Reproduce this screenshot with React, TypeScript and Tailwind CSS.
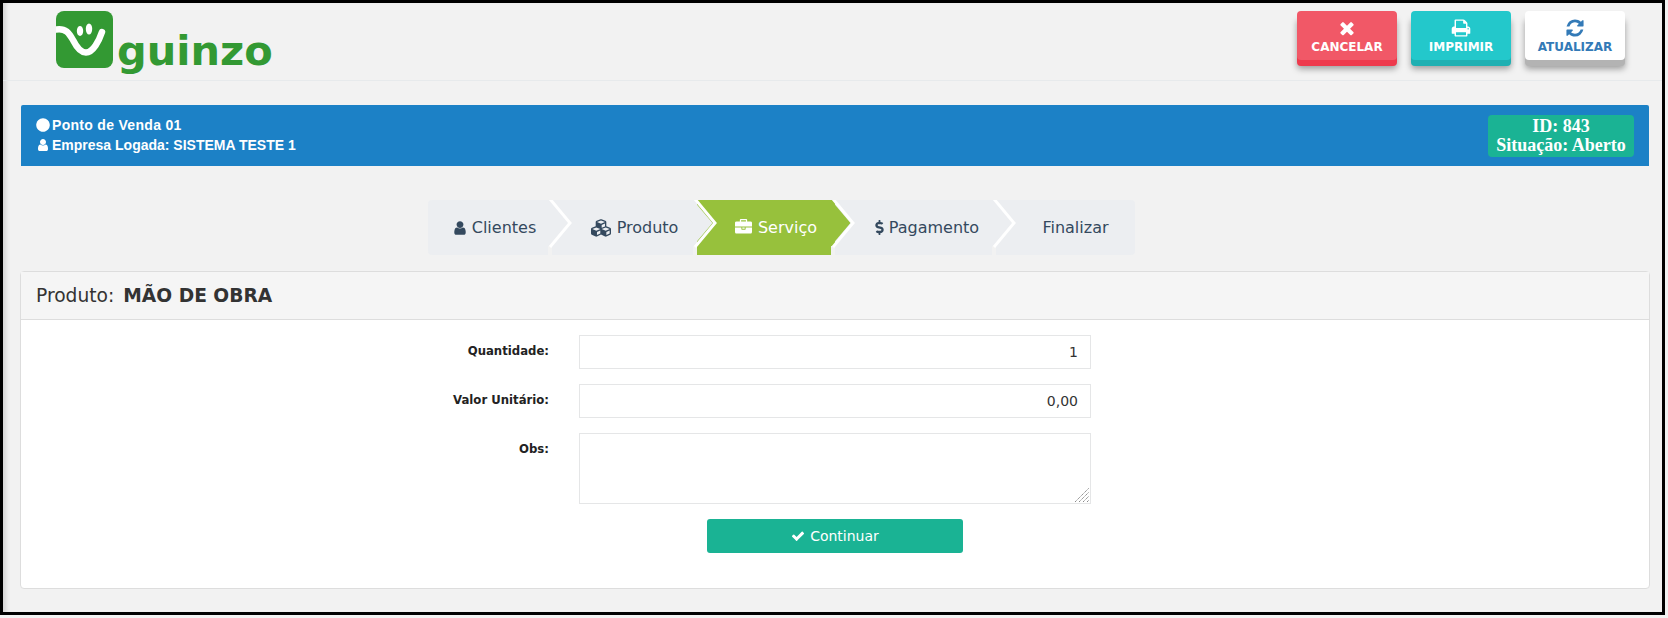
import { FaCircle, FaCubes, FaDollarSign } from 'react-icons/fa';
import type { ReactNode } from 'react';

const verdana = 'font-["DejaVu_Sans",sans-serif]';

const paths = {
  user: 'M1536 1399q0 109-62.5 187t-150.5 78h-854q-88 0-150.5-78t-62.5-187q0-85 8.5-160.5t31.5-152 58.5-131 94-89 134.5-34.5q131 128 313 128t313-128q76 0 134.5 34.5t94 89 58.5 131 31.5 152 8.5 160.5zm-256-887q0 159-112.5 271.5t-271.5 112.5-271.5-112.5-112.5-271.5 112.5-271.5 271.5-112.5 271.5 112.5 112.5 271.5z',
  times: 'M1490 1322q0 40-28 68l-136 136q-28 28-68 28t-68-28l-294-294-294 294q-28 28-68 28t-68-28l-136-136q-28-28-28-68t28-68l294-294-294-294q-28-28-28-68t28-68l136-136q28-28 68-28t68 28l294 294 294-294q28-28 68-28t68 28l136 136q28 28 28 68t-28 68l-294 294 294 294q28 28 28 68z',
  check: 'M1671 566q0 40-28 68l-724 724-136 136q-28 28-68 28t-68-28l-136-136-362-362q-28-28-28-68t28-68l136-136q28-28 68-28t68 28l294 295 656-657q28-28 68-28t68 28l136 136q28 28 28 68z',
  print: 'M448 1536h896v-256h-896v256zm0-640h896v-384h-160q-40 0-68-28t-28-68v-160h-640v640zm1152 64q0-26-19-45t-45-19-45 19-19 45 19 45 45 19 45-19 19-45zm128 0v416q0 13-9.5 22.5t-22.5 9.5h-224v160q0 40-28 68t-68 28h-960q-40 0-68-28t-28-68v-160h-224q-13 0-22.5-9.5t-9.5-22.5v-416q0-79 56.5-135.5t135.5-56.5h64v-544q0-40 28-68t68-28h672q40 0 88 20t76 48l152 152q28 28 48 76t20 88v256h64q79 0 135.5 56.5t56.5 135.5z',
  refresh: 'M1639 1056q0 5-1 7-64 268-268 434.5t-478 166.5q-146 0-282.5-55t-243.5-157l-129 129q-19 19-45 19t-45-19-19-45v-448q0-26 19-45t45-19h448q26 0 45 19t19 45-19 45l-137 137q71 66 161 102t187 36q134 0 250-65t186-179q11-17 53-117 8-23 30-23h192q13 0 22.5 9.5t9.5 22.5zm25-800v448q0 26-19 45t-45 19h-448q-26 0-45-19t-19-45 19-45l138-138q-148-137-349-137-134 0-250 65t-186 179q-11 17-53 117-8 23-30 23h-199q-13 0-22.5-9.5t-9.5-22.5v-7q65-268 270-434.5t480-166.5q146 0 284 55.5t245 156.5l130-129q19-19 45-19t45 19 19 45z',
  briefcase: 'M640 256h512v-128h-512v128zm1152 640v480q0 66-47 113t-113 47h-1472q-66 0-113-47t-47-113v-480h672v160q0 26 19 45t45 19h320q26 0 45-19t19-45v-160h672zm-768 0v128h-256v-128h256zm768-480v384h-1792v-384q0-66 47-113t113-47h352v-160q0-40 28-68t68-28h576q40 0 68 28t28 68v160h352q66 0 113 47t47 113z',
};

function Icon({ name, size, className }: { name: keyof typeof paths; size: number; className?: string }) {
  return (
    <svg width={size} height={size} viewBox="0 0 1792 1792" fill="currentColor" className={`shrink-0 ${className ?? ''}`}>
      <path d={paths[name]} />
    </svg>
  );
}

function Logo() {
  return (
    <div className="flex items-start">
      <svg width="57" height="57" viewBox="0 0 57 57" className="mt-[8px] shrink-0">
        <rect x="0" y="0" width="57" height="57" rx="8" fill="#339933" />
        <path d="M0 18.5 C10 17 13 22 17 29 C21 37 25 41.5 30 41.5 C37 41.5 43 30 46 21" fill="none" stroke="#fff" strokeWidth="6.5" strokeLinecap="round" />
        <ellipse cx="24" cy="20" rx="3.2" ry="5" fill="#fff" />
        <ellipse cx="33" cy="18" rx="3.2" ry="5.5" fill="#fff" />
      </svg>
      <span className={`ml-[4px] mt-[23px] text-[41.5px] leading-[50px] font-bold text-[#339933] ${verdana}`}>guinzo</span>
    </div>
  );
}

function ActionButton({ label, icon, color }: { label: string; icon: ReactNode; color: string }) {
  return (
    <button className={`flex h-[49px] w-[100px] flex-col items-center rounded-[4px] pt-[7px] text-[12px] font-bold leading-[18px] ${verdana} ${color}`}>
      {icon}
      <span>{label}</span>
    </button>
  );
}

function Chevron({ fill }: { fill: string }) {
  return (
    <svg width="28" height="55" viewBox="-4 0 28 55" className="absolute left-[calc(100%-4px)] top-0 z-10">
      <rect x="-4" y="46" width="4" height="9" fill="#f2f2f2" />
      <polygon points="-4,0 15.5,23 -4,46" fill={fill} />
      <polyline points="-2,-1 18,23 -2,47" fill="none" stroke="#fff" strokeWidth="3" />
    </svg>
  );
}

function Step({ width, active, className, arrow, children }: { width: string; active?: boolean; className?: string; arrow?: boolean; children: ReactNode }) {
  return (
    <div className={`relative flex h-[55px] items-center justify-center text-[16px] ${width} ${active ? 'bg-[#97c13c] text-white' : 'bg-[#eceef1] text-[#34495e]'} ${className ?? ''}`}>
      {children}
      {arrow && <Chevron fill={active ? '#97c13c' : '#eceef1'} />}
    </div>
  );
}

function FormRow({ label, children, className }: { label: string; children: ReactNode; className?: string }) {
  return (
    <div className={`flex items-start ${className ?? ''}`}>
      <label className="w-[528px] pt-[7px] text-right text-[11.7px] font-bold leading-[18px] text-[#222]">{label}</label>
      <div className="relative ml-[30px] w-[512px]">{children}</div>
    </div>
  );
}

export default function App() {
  return (
    <div className={`h-[618px] w-[1668px] overflow-hidden bg-[#f2f2f2] ${verdana}`}>
      <div className="h-[615px] w-[1665px] border-3 border-black bg-[#f2f2f2] shadow-[inset_5px_0_4px_-2px_rgba(0,0,0,0.12)]">
        <header className="flex h-[78px] items-start justify-between border-b border-[#e7eaec] pl-[53px] pr-[37px]">
          <Logo />
          <div className="mt-[8px] flex gap-[14px]">
            <ActionButton
              label="CANCELAR"
              icon={<Icon name="times" size={20} />}
              color="bg-[#f15867] text-white shadow-[0_6px_0_#ee3a4d,0_9px_6px_rgba(0,0,0,0.35)]"
            />
            <ActionButton
              label="IMPRIMIR"
              icon={<Icon name="print" size={20} />}
              color="bg-[#23c8cb] text-white shadow-[0_6px_0_#1fb0b2,0_9px_6px_rgba(0,0,0,0.35)]"
            />
            <ActionButton
              label="ATUALIZAR"
              icon={<Icon name="refresh" size={20} />}
              color="bg-white text-[#337ab7] shadow-[0_6px_0_#b3b3b3,0_9px_6px_rgba(0,0,0,0.35)]"
            />
          </div>
        </header>

        <div className="ml-[18px] mr-[13px] mt-[24px] flex h-[61px] items-center justify-between rounded-t-[2px] bg-[#1c81c6] pl-[15px] pr-[15px] text-white">
          <div className={`-mt-[2px] font-["Liberation_Sans",sans-serif] text-[14px] font-bold leading-[20px]`}>
            <div className="flex items-center gap-[2px] tracking-[0.3px]">
              <FaCircle size={14} />
              Ponto de Venda 01
            </div>
            <div className="flex items-center gap-[2px]">
              <Icon name="user" size={14} />
              Empresa Logada: SISTEMA TESTE 1
            </div>
          </div>
          <div className={`flex h-[42px] w-[146px] flex-col items-center justify-center rounded-[4px] bg-[#1ab394] font-["Liberation_Serif",serif] text-[18px] font-bold leading-[19px]`}>
            <span>ID: 843</span>
            <span>Situação: Aberto</span>
          </div>
        </div>

        <nav className="ml-[425px] mt-[34px] flex w-[707px]">
          <Step width="w-[124px]" className="rounded-l-[4px] pl-[8px]" arrow>
            <Icon name="user" size={16} className="mr-[4px]" />
            Clientes
          </Step>
          <Step width="w-[145px]" className="pl-[20px]" arrow>
            <FaCubes size={20} className="mr-[6px]" />
            Produto
          </Step>
          <Step width="w-[138px]" className="pl-[20px]" active arrow>
            <Icon name="briefcase" size={17} className="mr-[6px]" />
            Serviço
          </Step>
          <Step width="w-[161px]" className="pl-[20px]" arrow>
            <FaDollarSign size={15} className="mr-[2px]" />
            Pagamento
          </Step>
          <Step width="w-[139px]" className="rounded-r-[4px] pl-[20px]">
            Finalizar
          </Step>
        </nav>

        <section className="ml-[17px] mr-[12px] mt-[16px] h-[318px] rounded-[4px] border border-[#dddddd] bg-white">
          <div className="flex h-[48px] items-center border-b border-[#dddddd] bg-[#f5f5f5] pl-[15px] text-[18.67px] text-[#333]">
            Produto:<strong className="ml-[9px]">MÃO DE OBRA</strong>
          </div>
          <div className="pt-[15px]">
            <FormRow label="Quantidade:">
              <input readOnly value="1" className="block h-[34px] w-full border border-[#e5e6e7] bg-white px-[12px] text-right text-[14px] text-[#333] outline-none" />
            </FormRow>
            <FormRow label="Valor Unitário:" className="mt-[15px]">
              <input readOnly value="0,00" className="block h-[34px] w-full border border-[#e5e6e7] bg-white px-[12px] text-right text-[14px] text-[#333] outline-none" />
            </FormRow>
            <FormRow label="Obs:" className="mt-[15px]">
              <textarea readOnly className="block h-[71px] w-full resize-none border border-[#e5e6e7] bg-white px-[12px] py-[6px] text-[14px] outline-none" />
              <svg width="14" height="14" viewBox="0 0 14 14" className="absolute bottom-[2px] right-[2px]" stroke="#8a8a8a" strokeWidth="1" strokeDasharray="1.4 0.6">
                <line x1="0" y1="14" x2="14" y2="0" />
                <line x1="4" y1="14" x2="14" y2="4" />
                <line x1="8" y1="14" x2="14" y2="8" />
                <line x1="12" y1="14" x2="14" y2="12" />
              </svg>
            </FormRow>
            <div className="mt-[15px] flex">
              <button className="ml-[686px] flex h-[34px] w-[256px] items-center justify-center gap-[5px] rounded-[3px] bg-[#1ab394] text-[14px] text-white">
                <Icon name="check" size={14} />
                Continuar
              </button>
            </div>
          </div>
        </section>
      </div>
    </div>
  );
}
